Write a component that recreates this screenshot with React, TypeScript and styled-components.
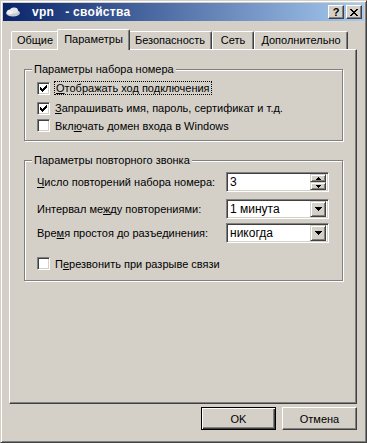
import React from 'react';
import styled, { createGlobalStyle } from 'styled-components';

const face = '#d4d0c8';
const shadow = '#808080';
const darkShadow = '#404040';
const highlight = '#ffffff';

const GlobalStyle = createGlobalStyle`
  html, body {
    margin: 0;
    padding: 0;
    background: ${face};
  }
  body {
    font-family: 'Liberation Sans', Arial, sans-serif;
    font-size: 11px;
    color: #000;
  }
`;

const Window = styled.div`
  width: 367px;
  height: 443px;
  box-sizing: border-box;
  border: 1px solid;
  border-color: ${face} ${darkShadow} ${darkShadow} ${face};
  box-shadow: inset 1px 1px ${highlight}, inset -1px -1px ${shadow};
  padding: 2px;
  display: flex;
  flex-direction: column;
  background: ${face};
`;

const TitleBar = styled.div`
  height: 18px;
  display: flex;
  align-items: center;
  padding: 0 2px 0 2px;
  background: linear-gradient(to right, #0a246a, #a6caf0);
  color: #fff;
`;

const TitleText = styled.div`
  flex: 1;
  margin-left: 11px;
  font-weight: bold;
  font-size: 12px;
  letter-spacing: 0.3px;
  white-space: pre;
`;

const CaptionButton = styled.div<{ gap?: number }>`
  width: 16px;
  height: 14px;
  box-sizing: border-box;
  background: ${face};
  border: 1px solid;
  border-color: ${highlight} ${darkShadow} ${darkShadow} ${highlight};
  box-shadow: inset -1px -1px ${shadow};
  display: flex;
  align-items: center;
  justify-content: center;
  color: #000;
  font-weight: bold;
  font-size: 11px;
  line-height: 1;
  margin-left: ${(p) => p.gap ?? 0}px;
`;

const Body = styled.div`
  flex: 1;
  display: flex;
  flex-direction: column;
  padding: 0 7px 0 6px;
`;

const TabStrip = styled.div`
  margin-top: 8px;
  height: 20px;
  display: flex;
  align-items: flex-end;
  padding-left: 2px;
`;

const Tab = styled.div<{ w: number; selected?: boolean }>`
  position: relative;
  z-index: ${(p) => (p.selected ? 2 : 1)};
  width: ${(p) => (p.selected ? p.w + 4 : p.w)}px;
  height: ${(p) => (p.selected ? 21 : 18)}px;
  margin: ${(p) => (p.selected ? '0 -2px -1px -2px' : '0')};
  box-sizing: border-box;
  background: ${face};
  border-left: 1px solid ${highlight};
  border-top: 1px solid ${highlight};
  border-right: 1px solid ${darkShadow};
  border-radius: 2px 2px 0 0;
  box-shadow: inset -1px 0 ${shadow};
  text-align: center;
  padding-top: ${(p) => (p.selected ? 3 : 2)}px;
  white-space: nowrap;
`;

const Panel = styled.div`
  height: 355px;
  box-sizing: border-box;
  border: 1px solid;
  border-color: ${highlight} ${darkShadow} ${darkShadow} ${highlight};
  box-shadow: inset -1px -1px ${shadow};
  padding: 19px 13px 0 14px;
  display: flex;
  flex-direction: column;
`;

const Group = styled.div<{ h: number; gap?: number; top: number }>`
  position: relative;
  height: ${(p) => p.h}px;
  margin-top: ${(p) => p.gap ?? 0}px;
  box-sizing: border-box;
  border: 1px solid ${shadow};
  box-shadow: 1px 1px 0 ${highlight}, inset 1px 1px 0 ${highlight};
  padding: ${(p) => p.top}px 13px 0 12px;
  display: flex;
  flex-direction: column;
`;

const Legend = styled.span`
  position: absolute;
  top: -7px;
  left: 7px;
  padding: 0 2px 0 2px;
  background: ${face};
  line-height: 13px;
`;

const CheckRow = styled.label<{ h: number; gap?: number }>`
  display: flex;
  align-items: center;
  height: ${(p) => p.h}px;
  margin-top: ${(p) => p.gap ?? 0}px;
  gap: 5px;
`;

const Box = styled.span`
  width: 13px;
  height: 13px;
  box-sizing: border-box;
  background: #fff;
  border: 1px solid;
  border-color: ${shadow} ${highlight} ${highlight} ${shadow};
  box-shadow: inset 1px 1px ${darkShadow}, inset -1px -1px ${face};
  display: flex;
  align-items: center;
  justify-content: center;
  flex: none;
`;

const Focus = styled.span`
  outline: 1px dotted #000;
  outline-offset: 0;
  padding: 0 1px;
`;

const U = styled.span`
  text-decoration: underline;
`;

const FieldRow = styled.div<{ gap?: number }>`
  display: flex;
  align-items: center;
  justify-content: space-between;
  height: 20px;
  margin-top: ${(p) => p.gap ?? 0}px;
`;

const Field = styled.div`
  width: 103px;
  height: 20px;
  box-sizing: border-box;
  background: #fff;
  border: 1px solid;
  border-color: ${shadow} ${highlight} ${highlight} ${shadow};
  box-shadow: inset 1px 1px ${darkShadow}, inset -1px -1px ${face};
  display: flex;
  align-items: center;
  padding: 2px 2px 2px 3px;
`;

const FieldText = styled.span`
  flex: 1;
  font-size: 12px;
`;

const SmallButton = styled.div<{ h: number }>`
  width: 16px;
  height: ${(p) => p.h}px;
  box-sizing: border-box;
  background: ${face};
  border: 1px solid;
  border-color: ${face} ${darkShadow} ${darkShadow} ${face};
  box-shadow: inset 1px 1px ${highlight}, inset -1px -1px ${shadow};
  display: flex;
  align-items: center;
  justify-content: center;
`;

const SpinStack = styled.div`
  display: flex;
  flex-direction: column;
`;

const Footer = styled.div`
  display: flex;
  justify-content: flex-end;
  gap: 6px;
  margin-top: 3px;
`;

const Button = styled.div<{ isDefault?: boolean }>`
  width: 75px;
  height: 23px;
  box-sizing: border-box;
  background: ${face};
  border: 1px solid;
  border-color: ${(p) =>
    p.isDefault ? '#000' : `${highlight} ${darkShadow} ${darkShadow} ${highlight}`};
  box-shadow: ${(p) =>
    p.isDefault
      ? `inset 1px 1px ${highlight}, inset -1px -1px ${darkShadow}, inset -2px -2px ${shadow}`
      : `inset -1px -1px ${shadow}`};
  display: flex;
  align-items: center;
  justify-content: center;
`;

const Check = () => (
  <svg width="7" height="7" viewBox="0 0 7 7" shapeRendering="crispEdges">
    <path d="M0 2h1v3h-1zM1 3h1v3h-1zM2 4h1v3h-1zM3 3h1v3h-1zM4 2h1v3h-1zM5 1h1v3h-1zM6 0h1v3h-1z" fill="#000" />
  </svg>
);

const DownArrow = () => (
  <svg width="7" height="4" viewBox="0 0 7 4" shapeRendering="crispEdges">
    <path d="M0 0h7v1h-7zM1 1h5v1h-5zM2 2h3v1h-3zM3 3h1v1h-1z" fill="#000" />
  </svg>
);

const SpinArrow = ({ up }: { up?: boolean }) => (
  <svg width="5" height="3" viewBox="0 0 5 3" shapeRendering="crispEdges">
    {up ? (
      <path d="M2 0h1v1h-1zM1 1h3v1h-3zM0 2h5v1h-5z" fill="#000" />
    ) : (
      <path d="M0 0h5v1h-5zM1 1h3v1h-3zM2 2h1v1h-1z" fill="#000" />
    )}
  </svg>
);

const CloseGlyph = () => (
  <svg width="8" height="7" viewBox="0 0 8 7" shapeRendering="crispEdges">
    <path
      d="M0 0h2v1h-2zM6 0h2v1h-2zM1 1h2v1h-2zM5 1h2v1h-2zM2 2h4v1h-4zM3 3h2v1h-2zM2 4h4v1h-4zM1 5h2v1h-2zM5 5h2v1h-2zM0 6h2v1h-2zM6 6h2v1h-2z"
      fill="#000"
    />
  </svg>
);

const NetIcon = () => (
  <svg width="16" height="12" viewBox="0 0 16 12">
    <ellipse cx="8" cy="7" rx="7" ry="3.5" fill="#c8ccd4" />
    <ellipse cx="9" cy="4.5" rx="4" ry="3" fill="#e4e6ea" />
    <ellipse cx="5" cy="6" rx="3" ry="2.5" fill="#eef0f2" />
  </svg>
);

const Checkbox = ({
  checked,
  h,
  gap,
  children,
}: {
  checked?: boolean;
  h: number;
  gap?: number;
  children: React.ReactNode;
}) => (
  <CheckRow h={h} gap={gap}>
    <Box>{checked && <Check />}</Box>
    <span>{children}</span>
  </CheckRow>
);

const Combo = ({ value }: { value: string }) => (
  <Field>
    <FieldText>{value}</FieldText>
    <SmallButton h={16}>
      <DownArrow />
    </SmallButton>
  </Field>
);

const Spin = ({ value }: { value: string }) => (
  <Field>
    <FieldText>{value}</FieldText>
    <SpinStack>
      <SmallButton h={8}>
        <SpinArrow up />
      </SmallButton>
      <SmallButton h={8}>
        <SpinArrow />
      </SmallButton>
    </SpinStack>
  </Field>
);

export default function App() {
  return (
    <>
      <GlobalStyle />
      <Window>
        <TitleBar>
          <NetIcon />
          <TitleText>{'vpn   - свойства'}</TitleText>
          <CaptionButton>?</CaptionButton>
          <CaptionButton gap={2}>
            <CloseGlyph />
          </CaptionButton>
        </TitleBar>
        <Body>
          <TabStrip>
            <Tab w={48}>Общие</Tab>
            <Tab w={69} selected>
              Параметры
            </Tab>
            <Tab w={84}>Безопасность</Tab>
            <Tab w={42}>Сеть</Tab>
            <Tab w={94}>Дополнительно</Tab>
          </TabStrip>
          <Panel>
            <Group h={72} top={8}>
              <Legend>Параметры набора номера</Legend>
              <Checkbox checked h={20}>
                <Focus>
                  <U>О</U>тображать ход подключения
                </Focus>
              </Checkbox>
              <Checkbox checked h={20}>
                <U>З</U>апрашивать имя, пароль, сертификат и т.д.
              </Checkbox>
              <Checkbox h={15}>
                Вкл<U>ю</U>чать домен входа в Windows
              </Checkbox>
            </Group>
            <Group h={121} gap={19} top={11}>
              <Legend>Параметры повторного звонка</Legend>
              <FieldRow>
                <span>
                  <U>Ч</U>исло повторений набора номера:
                </span>
                <Spin value="3" />
              </FieldRow>
              <FieldRow gap={7}>
                <span>
                  Интервал ме<U>ж</U>ду повторениями:
                </span>
                <Combo value="1 минута" />
              </FieldRow>
              <FieldRow gap={4}>
                <span>
                  Вре<U>м</U>я простоя до разъединения:
                </span>
                <Combo value="никогда" />
              </FieldRow>
              <Checkbox h={13} gap={14}>
                П<U>е</U>резвонить при разрыве связи
              </Checkbox>
            </Group>
          </Panel>
          <Footer>
            <Button isDefault>OK</Button>
            <Button>Отмена</Button>
          </Footer>
        </Body>
      </Window>
    </>
  );
}
